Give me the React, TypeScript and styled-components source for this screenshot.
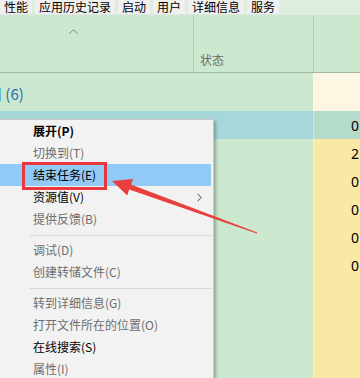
import React from 'react';
import styled, { createGlobalStyle } from 'styled-components';

const Global = createGlobalStyle`
  html, body { margin: 0; padding: 0; background: #cce8cf; }
  body { font-family: "Noto Sans CJK SC", "Noto Sans", sans-serif; }
`;

const Screen = styled.div`
  position: relative;
  width: 360px;
  height: 378px;
  overflow: hidden;
  background: #cce8cf;
  font-family: "Noto Sans CJK SC", "Noto Sans", sans-serif;
`;

const TabBar = styled.div`
  display: flex;
  gap: 3px;
  height: 15px;
  background: #deeddd;
`;

const Tab = styled.div`
  height: 14px;
  padding: 0 4px;
  background: #f0f0f0;
  border-bottom: 1px solid #e2e6e2;
  font-size: 12px;
  line-height: 13px;
  color: #000;
  white-space: nowrap;
`;

const Header = styled.div`
  display: grid;
  grid-template-columns: 193px 120px 1fr;
  height: 57px;
  border-bottom: 1px solid #a2b6a3;
`;

const HeaderCell = styled.div<{ $divider?: boolean; $sort?: boolean }>`
  display: flex;
  flex-direction: column;
  justify-content: ${p => (p.$sort ? 'flex-start' : 'flex-end')};
  border-left: ${p => (p.$divider ? '1px solid #b6ccb7' : 'none')};
  padding: ${p => (p.$sort ? '14px 0 0 69px' : '0 0 6px 6px')};
  font-size: 12px;
  line-height: 12px;
  color: #6d6d6d;
`;

const Row = styled.div<{ $h: number; $bg: string }>`
  display: grid;
  grid-template-columns: 313px 47px;
  height: ${p => p.$h}px;
  background: ${p => p.$bg};
`;

const GroupLabel = styled.div`
  display: flex;
  align-items: center;
  margin-left: -28px;
  padding-top: 3px;
  font-family: "Noto Sans CJK SC", "Noto Sans", sans-serif;
  font-size: 15px;
  color: #2a6db2;
  white-space: nowrap;
`;

const ValueCell = styled.div<{ $bg: string }>`
  display: flex;
  align-items: center;
  padding-left: 37px;
  background: ${p => p.$bg};
  border-left: 1px solid rgba(255, 255, 255, 0.35);
  font-family: "Noto Sans", sans-serif;
  font-size: 14px;
  color: #000;
  white-space: nowrap;
  overflow: hidden;
`;

const Menu = styled.div`
  position: absolute;
  left: -1px;
  top: 119px;
  width: 213px;
  bottom: -20px;
  background: #f2f2f2;
  border: 1px solid #c9c9c9;
  box-shadow: 2px 2px 3px rgba(0, 0, 0, 0.28);
`;

const Item = styled.div<{ $disabled?: boolean; $bold?: boolean; $active?: boolean }>`
  display: flex;
  align-items: center;
  height: 22px;
  margin-right: 2px;
  padding-left: 33px;
  font-size: 12px;
  line-height: 22px;
  font-weight: ${p => (p.$bold ? 700 : 400)};
  color: ${p => (p.$disabled ? '#6d6d6d' : '#000')};
  background: ${p => (p.$active ? '#91c9f7' : 'transparent')};
  white-space: nowrap;
`;

const Marked = styled.span`
  position: relative;
  display: inline-block;
  &::after {
    content: '';
    position: absolute;
    top: -2px;
    bottom: -4px;
    left: -11px;
    right: -11px;
    border: 3px solid #e8383d;
  }
`;

const Chevron = styled.svg`
  margin-left: auto;
  margin-right: 9px;
`;

const Separator = styled.div`
  height: 1px;
  margin: 5px 2px 3px 30px;
  background: #d6d6d6;
`;

const Overlay = styled.svg`
  position: absolute;
  left: 0;
  top: 0;
  pointer-events: none;
`;

const values = ['0', '2', '0', '0', '0', '0'];

export default function App() {
  return (
    <Screen>
      <Global />
      <TabBar>
        {['性能', '应用历史记录', '启动', '用户', '详细信息', '服务'].map(t => (
          <Tab key={t}>{t}</Tab>
        ))}
      </TabBar>
      <Header>
        <HeaderCell $sort>
          <svg width="9" height="5" viewBox="0 0 9 5">
            <path d="M0.5 4.5 L4.5 0.8 L8.5 4.5" fill="none" stroke="#7d8a7e" strokeWidth="1" />
          </svg>
        </HeaderCell>
        <HeaderCell $divider>状态</HeaderCell>
        <HeaderCell $divider />
      </Header>
      <Row $h={38} $bg="#cce8cf">
        <GroupLabel>应用 (6)</GroupLabel>
        <ValueCell $bg="#fdf6e2" />
      </Row>
      {values.map((v, i) => (
        <Row key={i} $h={28} $bg={i === 0 ? '#a8d7d9' : '#cce8cf'}>
          <div />
          <ValueCell $bg={i === 0 ? '#b5dccb' : '#f9e8a6'}>{v}</ValueCell>
        </Row>
      ))}
      {[0, 1, 2, 3].map(i => (
        <Row key={'e' + i} $h={28} $bg="#cce8cf">
          <div />
          <ValueCell $bg="#f9e8a6" />
        </Row>
      ))}
      <Menu>
        <Item $bold>展开(P)</Item>
        <Item $disabled>切换到(T)</Item>
        <Item $active>
          <Marked>结束任务(E)</Marked>
        </Item>
        <Item>
          资源值(V)
          <Chevron width="5" height="9" viewBox="0 0 5 9">
            <path d="M0.6 0.8 L4.2 4.5 L0.6 8.2" fill="none" stroke="#444" strokeWidth="1" />
          </Chevron>
        </Item>
        <Item $disabled>提供反馈(B)</Item>
        <Separator />
        <Item $disabled>调试(D)</Item>
        <Item $disabled>创建转储文件(C)</Item>
        <Separator />
        <Item $disabled>转到详细信息(G)</Item>
        <Item $disabled>打开文件所在的位置(O)</Item>
        <Item>在线搜索(S)</Item>
        <Item $disabled>属性(I)</Item>
      </Menu>
      <Overlay width="360" height="378" viewBox="0 0 360 378">
        <polygon
          points="112,181 133,179 131,184.6 257.2,232.5 256.8,233.5 129.2,189.4 127.3,195.5"
          fill="#e8403f"
        />
      </Overlay>
    </Screen>
  );
}
